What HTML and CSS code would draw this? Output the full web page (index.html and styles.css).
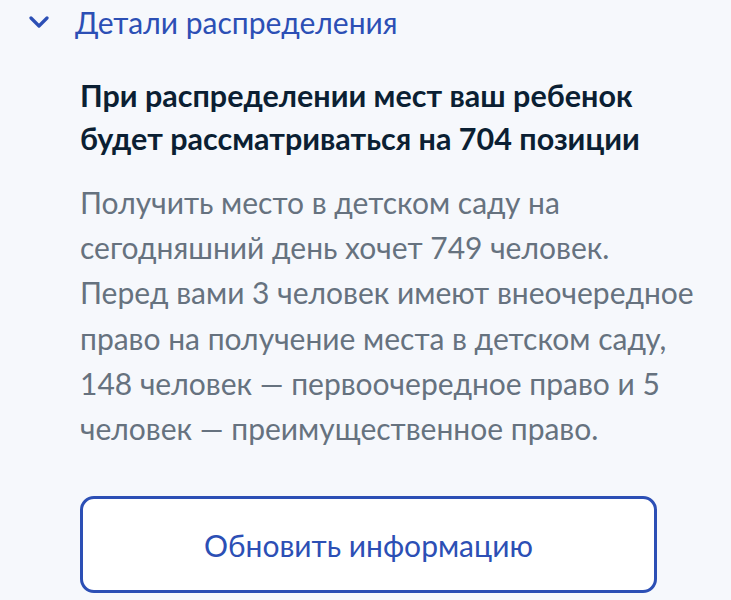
FILE: index.html
```html
<!DOCTYPE html>
<html lang="ru">
<head>
<meta charset="UTF-8">
<meta name="viewport" content="width=device-width, initial-scale=1.0">
<title>Детали распределения</title>
<link rel="stylesheet" href="styles.css">
</head>
<body>
<div class="details">
    <!-- Toggle header -->
    <div class="details-head">
        <svg class="chevron" width="20" height="14" viewBox="0 0 20 14">
            <path d="M2 3 L10 11 L18 3" fill="none" stroke="#2c4fb5" stroke-width="3.2" stroke-linecap="round" stroke-linejoin="round"/>
        </svg>
        <span class="details-title">Детали распределения</span>
    </div>

    <div class="details-body">
        <h2 class="position">При распределении мест ваш ребенок будет рассматриваться на 704 позиции</h2>
        <p class="queue-info">Получить место в детском саду на сегодняшний день хочет 749 человек. Перед вами 3 человек имеют внеочередное право на получение места в детском саду, 148 человек — первоочередное право и 5 человек — преимущественное право.</p>
        <button type="button" class="refresh-btn">Обновить информацию</button>
    </div>
</div>
</body>
</html>
```

FILE: styles.css
```css
body {
    margin: 0;
    padding: 0;
    background-color: #f6f8fc;
    font-family: Lato, "Open Sans", sans-serif;
}
.details {
    padding: 0 0 0 29px;
}
.details-head {
    display: flex;
    align-items: center;
    height: 44px;
}
.chevron {
    margin-right: 26px;
}
.details-title {
    font-size: 30px;
    color: #2c4fb5;
}
.details-body {
    padding: 30px 30px 0 51px;
}
.position {
    margin: 0;
    font-size: 30.5px;
    font-weight: 700;
    line-height: 43px;
    color: #0b1f33;
}
.queue-info {
    margin: 20px 0 0;
    font-size: 30px;
    line-height: 45.2px;
    color: #66727f;
}
.refresh-btn {
    display: block;
    margin-top: 45px;
    width: 577px;
    height: 97px;
    border: 3px solid #2c4fb5;
    border-radius: 14px;
    background-color: #fff;
    font-family: inherit;
    font-size: 30px;
    color: #2c4fb5;
}
```
